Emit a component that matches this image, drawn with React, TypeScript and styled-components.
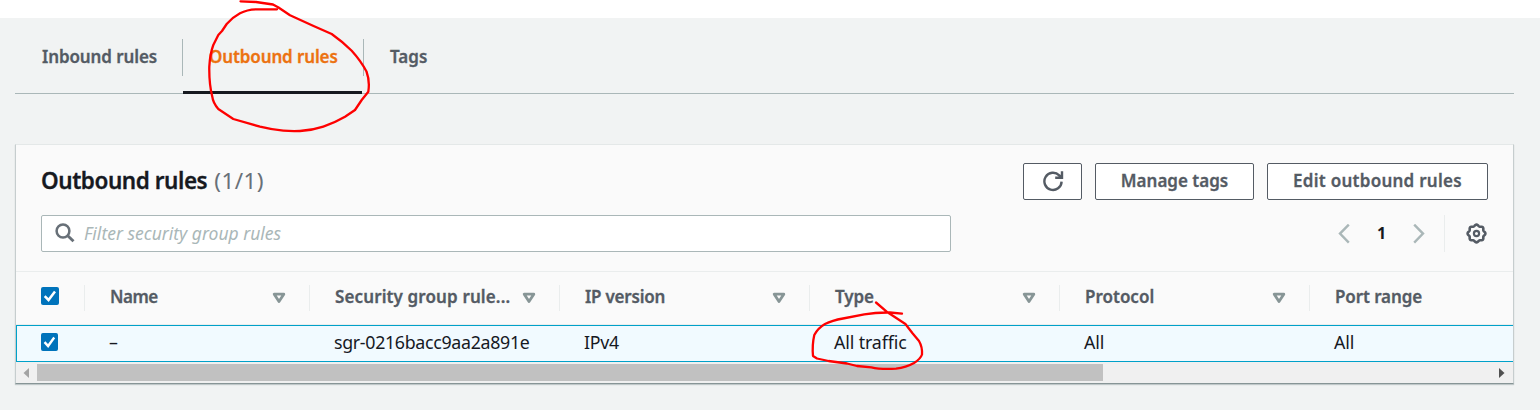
import React from "react";
import styled, { createGlobalStyle } from "styled-components";

const GlobalStyle = createGlobalStyle`
  * { box-sizing: border-box; }
  body {
    margin: 0;
    background: #f1f3f3;
    font-family: "Noto Sans", "Open Sans", sans-serif;
    font-size: 17px;
    color: #16191f;
    overflow: hidden;
  }
`;

const Page = styled.div`
  position: relative;
  height: 410px;
  padding: 0 26px 0 15px;
  border-top: 18px solid #fff;
`;

const Label = styled.span<{ $spacing?: number }>`
  letter-spacing: ${(p) => p.$spacing ?? 0}px;
  white-space: nowrap;
`;

const StrongLabel = styled(Label)`
  font-weight: 600;
  -webkit-text-stroke: 0.3px currentColor;
`;

const TabBar = styled.nav`
  display: flex;
  height: 76px;
  border-bottom: 1px solid #aab7b8;
`;

const Tab = styled.div<{ $width: number; $inset: number; $active?: boolean }>`
  width: ${(p) => p.$width}px;
  height: 76px;
  padding: 26px 0 0 ${(p) => p.$inset}px;
  line-height: 26px;
  color: ${(p) => (p.$active ? "#ec7211" : "#545b64")};
  border-bottom: ${(p) => (p.$active ? "3px solid #16191f" : "0")};
`;

const TabDivider = styled.div<{ $gap?: number }>`
  width: 1px;
  height: 37px;
  margin: 21px 0 0 ${(p) => p.$gap ?? 0}px;
  background: #aab7b8;
`;

const Panel = styled.section`
  height: 240px;
  margin-top: 50px;
  display: flex;
  flex-direction: column;
  background: #fafafa;
  border: 1px solid #c6cdce;
  border-top-color: #e4e8e8;
  border-bottom-color: #879596;
  box-shadow: 0 1px 1px rgba(0, 28, 36, 0.2);
`;

const PanelHeader = styled.header`
  height: 126px;
  padding: 18px 25px 0;
`;

const HeaderRow = styled.div`
  display: flex;
  align-items: center;
  justify-content: space-between;
  height: 37px;
  margin-bottom: 15px;
`;

const Title = styled.h2`
  margin: 0;
  padding-bottom: 1px;
  font-size: 22.5px;
  line-height: 34px;
  font-weight: 400;
`;

const Count = styled.span`
  margin-left: 7px;
  letter-spacing: 0.4px;
  color: #687078;
`;

const Actions = styled.div`
  display: flex;
  gap: 13px;
`;

const Button = styled.button<{ $width: number }>`
  display: flex;
  align-items: center;
  justify-content: center;
  width: ${(p) => p.$width}px;
  height: 37px;
  padding: 0 0 2px;
  background: #fff;
  border: 1px solid #545b64;
  border-radius: 2px;
  font: 400 17px "Noto Sans", sans-serif;
  color: #545b64;
`;

const SearchBox = styled.div`
  display: flex;
  align-items: center;
  gap: 9px;
  width: 910px;
  height: 37px;
  padding: 0 0 1px 13px;
  background: #fff;
  border: 1px solid #aab7b8;
  border-radius: 2px;
  color: #aab7b8;
  font-size: 17.5px;
  font-style: italic;
`;

const Pager = styled.div`
  display: flex;
  align-items: center;
  height: 37px;
  font-size: 16px;
  font-weight: 700;
`;

const PageNumber = styled.span`
  width: 63px;
  padding-bottom: 2px;
  text-align: center;
`;

const Settings = styled.div`
  display: flex;
  align-items: center;
  justify-content: flex-end;
  width: 44px;
  height: 37px;
  margin-left: 19px;
  padding: 0 1.5px 1px 0;
  border-left: 1px solid #eaeded;
`;

const TableRow = styled.div<{ $head?: boolean }>`
  display: flex;
  flex: none;
  height: ${(p) => (p.$head ? 54 : 37)}px;
  overflow: hidden;
  border: 1px solid ${(p) => (p.$head ? "#eaeded" : "#00a1c9")};
  border-width: ${(p) => (p.$head ? "1px 0" : "1px 0 1px 1px")};
  background: ${(p) => (p.$head ? "#fafafa" : "#f1faff")};
  color: ${(p) => (p.$head ? "#545b64" : "#16191f")};
  font-size: ${(p) => (p.$head ? 17 : 17.8)}px;
`;

const CheckCell = styled.div<{ $head?: boolean }>`
  flex: none;
  width: ${(p) => (p.$head ? 68 : 67)}px;
  padding: ${(p) => (p.$head ? "15px 0 0 25px" : "7px 0 0 24px")};
`;

const HeadCell = styled.div<{ $width: number }>`
  display: flex;
  flex: none;
  align-items: center;
  justify-content: space-between;
  width: ${(p) => p.$width}px;
  height: 26px;
  margin-top: 13px;
  padding: 0 23px 0 25px;
  border-left: 1px solid #eaeded;

  ${StrongLabel} {
    padding-bottom: 3px;
  }
`;

const Cell = styled.div<{ $width: number }>`
  flex: none;
  width: ${(p) => p.$width}px;
  padding-left: 25px;
  line-height: 33px;
`;

const ScrollBar = styled.div`
  display: flex;
  align-items: center;
  justify-content: space-between;
  flex: 1;
  padding: 0 8px 0 7px;
  background: #f0f0f0;
`;

const Thumb = styled.div`
  width: 1066px;
  height: 17px;
  margin: 0 auto 0 8px;
  background: #c1c1c1;
`;

const Annotations = styled.svg`
  position: absolute;
  top: -18px;
  left: 0;
  pointer-events: none;
`;

const CheckMark = styled.svg`
  display: block;
`;

const Checkbox = ({ width = 18 }: { width?: number }) => (
  <CheckMark width={width} height="18" viewBox="0 0 18 18" preserveAspectRatio="none">
    <rect width="18" height="18" rx="2" fill="#0073bb" />
    <path d="M3.7 9.2 7.5 13 14 4.4" fill="none" stroke="#fff" strokeWidth="2.5" />
  </CheckMark>
);

const SortIcon = () => (
  <svg width="14" height="12" viewBox="0 0 14 12">
    <path d="M2.2 2.2H11.8L7 9.6Z" fill="none" stroke="#879596" strokeWidth="2.8" strokeLinejoin="round" />
  </svg>
);

const RefreshIcon = () => (
  <svg width="22" height="22" viewBox="0 0 22 22" fill="none" stroke="#545b64" strokeWidth="2.4">
    <path d="M19.6 11.6A8.6 8.6 0 1 1 17.2 5.4L18.6 7" />
    <path d="M20 1.2V7.7H13.2" />
    <path d="M20 3.5V7.7H15.5Z" fill="#545b64" stroke="none" />
  </svg>
);

const SearchIcon = () => (
  <svg width="20" height="20" viewBox="0 0 20 20" fill="none" stroke="#687078" strokeWidth="2.5">
    <circle cx="8" cy="8" r="6.4" />
    <path d="M12.5 12.5 18.5 18.3" strokeWidth="2.9" />
  </svg>
);

const Chevron = ({ flip }: { flip?: boolean }) => (
  <svg width="12" height="20" viewBox="0 0 12 20" fill="none" stroke="#aab7b8" strokeWidth="2.4">
    <path d={flip ? "M1.2 .6 10 9.6 1.2 18.6" : "M10.8 .6 2 9.6 10.8 18.6"} />
  </svg>
);

const gearPath = (() => {
  const points: string[] = [];
  for (let i = 0; i <= 96; i++) {
    const a = (i / 96) * Math.PI * 2;
    const r = 8.2 + 0.7 * Math.cos(a * 8);
    points.push(`${(10.5 + r * Math.sin(a)).toFixed(2)} ${(10.5 - r * Math.cos(a)).toFixed(2)}`);
  }
  return `M${points.join("L")}Z`;
})();

const GearIcon = () => (
  <svg width="21" height="21" viewBox="0 0 21 21" fill="none" stroke="#545b64" strokeWidth="2.6">
    <path d={gearPath} />
    <circle cx="10.5" cy="10.5" r="2.6" strokeWidth="2.2" />
  </svg>
);

const Arrow = ({ right }: { right?: boolean }) => (
  <svg width="6" height="10" viewBox="0 0 6 10">
    <path d={right ? "M0 0 5.5 5 0 10Z" : "M6 0 .5 5 6 10Z"} fill={right ? "#505050" : "#a3a3a3"} />
  </svg>
);

const columns = [
  { name: "Name", value: "–", width: 225, ns: -0.5, vs: 0 },
  { name: "Security group rule...", value: "sgr-0216bacc9aa2a891e", width: 250, ns: 0.12, vs: -0.31 },
  { name: "IP version", value: "IPv4", width: 250, ns: -0.22, vs: -0.25 },
  { name: "Type", value: "All traffic", width: 250, ns: -0.1, vs: -0.12 },
  { name: "Protocol", value: "All", width: 250, ns: 0, vs: -0.1 },
  { name: "Port range", value: "All", width: 250, ns: -0.1, vs: -0.1 },
];

export default function App() {
  return (
    <>
      <GlobalStyle />
      <Page>
        <TabBar>
          <Tab $width={167} $inset={27}><StrongLabel $spacing={-0.1}>Inbound rules</StrongLabel></Tab>
          <TabDivider />
          <Tab $width={179} $inset={26} $active><StrongLabel $spacing={-0.12}>Outbound rules</StrongLabel></Tab>
          <TabDivider $gap={1} />
          <Tab $width={90} $inset={26}><StrongLabel>Tags</StrongLabel></Tab>
        </TabBar>

        <Panel>
          <PanelHeader>
            <HeaderRow>
              <Title><StrongLabel $spacing={-0.45}>Outbound rules</StrongLabel><Count>(1/1)</Count></Title>
              <Actions>
                <Button $width={59} aria-label="Refresh"><RefreshIcon /></Button>
                <Button $width={159}><StrongLabel>Manage tags</StrongLabel></Button>
                <Button $width={221}><StrongLabel $spacing={0.27}>Edit outbound rules</StrongLabel></Button>
              </Actions>
            </HeaderRow>
            <HeaderRow>
              <SearchBox><SearchIcon /><Label>Filter security group rules</Label></SearchBox>
              <Pager>
                <Chevron />
                <PageNumber>1</PageNumber>
                <Chevron flip />
                <Settings><GearIcon /></Settings>
              </Pager>
            </HeaderRow>
          </PanelHeader>

          <TableRow $head>
            <CheckCell $head><Checkbox /></CheckCell>
            {columns.map((c) => (
              <HeadCell key={c.name} $width={c.width}>
                <StrongLabel $spacing={c.ns}>{c.name}</StrongLabel><SortIcon />
              </HeadCell>
            ))}
          </TableRow>
          <TableRow>
            <CheckCell><Checkbox width={17} /></CheckCell>
            {columns.map((c) => (
              <Cell key={c.name} $width={c.width}><Label $spacing={c.vs}>{c.value}</Label></Cell>
            ))}
          </TableRow>
          <ScrollBar><Arrow /><Thumb /><Arrow right /></ScrollBar>
        </Panel>

        <Annotations width="1540" height="410" fill="none" stroke="#fe0000" strokeWidth="2.3" strokeLinejoin="round" strokeLinecap="round">
          <path d="M240.5 1.3 256 2 273 4.5 278.5 7.5 290 15.3 313 25.7 331.7 34 Q343 42 351.7 50.7 Q361 61 366.5 71.5 Q370 81 368.3 91.7L361.7 100 355 110 345 116.7 Q334 123 323.3 126.7 Q312 130.5 300 131 Q291 131.3 283.3 130.7 Q271 129.5 260 126.7L233.3 119 218.3 109 Q213 103 212.3 96.7 Q209 84 209.3 66.7 Q210 54 213.3 45 L218.3 35 222 31 226.7 24 Q233 17 240 13.3 Q247 9.5 256 9.3 H277" />
          <path d="M876 302.5 887.5 312.3 905.4 324 912.5 333.3 919 341 Q922.5 347 922 354.5 Q920.5 359 914 363 Q906 367.5 896 368.7 Q880 369.5 871.4 367.3 L857 366 847 363.5 828.6 361 817 358.5 813 356 Q812 345 814.3 335 Q818 328 825 324 Q832 320.5 843 318.5 L864.3 314.3 Q876 312.3 890 312.5 L902 313.7" />
        </Annotations>
      </Page>
    </>
  );
}
